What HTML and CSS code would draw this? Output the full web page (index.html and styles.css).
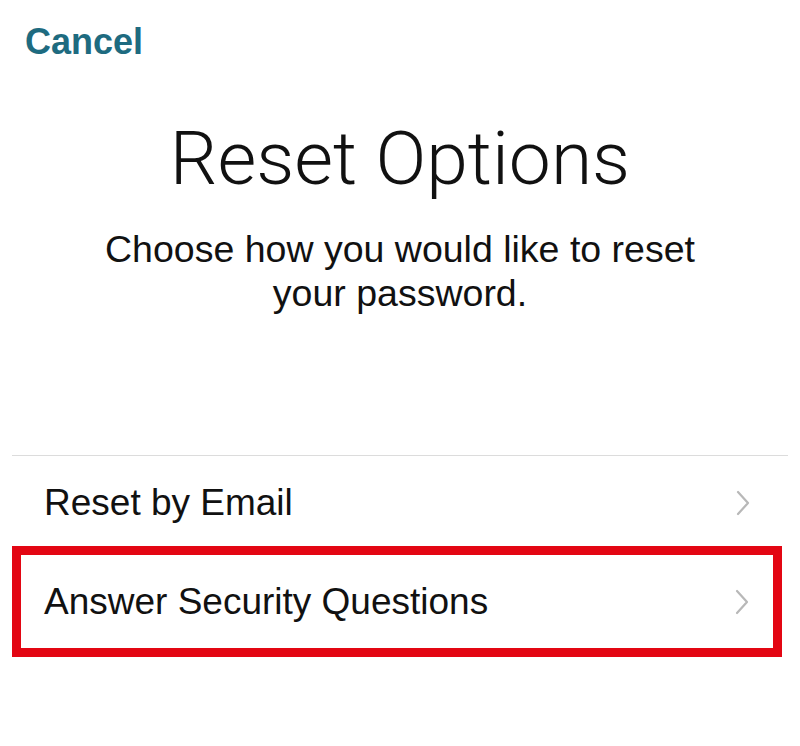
FILE: index.html
```html
<!DOCTYPE html>
<html lang="en">
<head>
<meta charset="utf-8">
<title>Reset Options</title>
<link rel="stylesheet" href="styles.css">
</head>
<body>
<div class="screen">
  <header class="topbar">
    <span class="cancel">Cancel</span>
  </header>
  <h1 class="title">Reset Options</h1>
  <p class="subtitle">Choose how you would like to reset<br>your password.</p>
  <div class="list">
    <div class="row">
      <span class="label">Reset by Email</span>
      <svg class="chev" width="14" height="26" viewBox="0 0 14 26"><path d="M2 2 L12 13 L2 24" fill="none" stroke="#b8b8b8" stroke-width="2.2" stroke-linecap="round" stroke-linejoin="round"/></svg>
    </div>
    <div class="row highlight">
      <span class="label">Answer Security Questions</span>
      <svg class="chev" width="14" height="26" viewBox="0 0 14 26"><path d="M2 2 L12 13 L2 24" fill="none" stroke="#b8b8b8" stroke-width="2.2" stroke-linecap="round" stroke-linejoin="round"/></svg>
    </div>
  </div>
</div>
</body>
</html>
```
FILE: styles.css
```css
html, body {
  margin: 0;
  padding: 0;
  background: #ffffff;
}
body {
  font-family: "Liberation Sans", Arial, sans-serif;
  color: #111111;
}
.screen {
  width: 800px;
  height: 746px;
  display: flex;
  flex-direction: column;
}
.topbar {
  padding: 21px 0 0 25px;
}
.cancel {
  font-size: 36px;
  font-weight: 700;
  color: #1e6b80;
  line-height: 41px;
}
.title {
  margin: 54px 0 0;
  text-align: center;
  font-family: Roboto, "Liberation Sans", sans-serif;
  font-weight: 300;
  font-size: 75px;
  line-height: 84px;
  color: #111111;
}
.subtitle {
  margin: 27px 0 0;
  text-align: center;
  font-size: 37.5px;
  line-height: 44px;
  color: #111111;
}
.list {
  margin: 140px 12px 0 12px;
  border-top: 1.5px solid #dcdcdc;
}
.row {
  display: flex;
  align-items: center;
  justify-content: space-between;
  height: 90px;
  padding: 3px 38px 0 32px;
  box-sizing: border-box;
}
.label {
  font-size: 37px;
  color: #111111;
}
.highlight {
  height: 111px;
  border: 9px solid #e30613;
  margin-right: 6px;
  padding: 0 24px 0 23px;
}
```
